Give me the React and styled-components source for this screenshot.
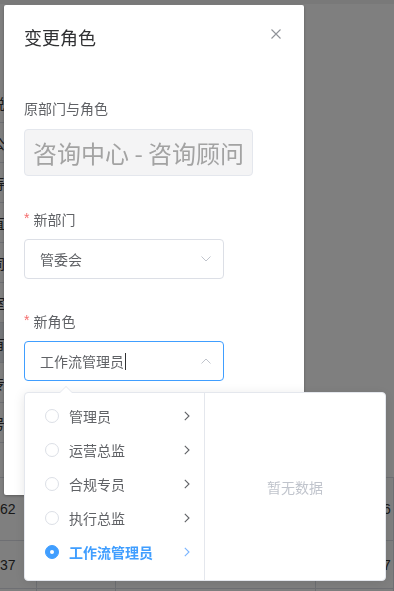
import React from 'react';
import styled, { createGlobalStyle } from 'styled-components';

const GlobalStyle = createGlobalStyle`
  html, body {
    margin: 0;
    padding: 0;
  }
  body {
    font-family: "Noto Sans CJK SC", "Noto Sans", sans-serif;
    background: #fff;
    overflow: hidden;
  }
`;

const Page = styled.div`
  width: 394px;
  height: 591px;
  overflow: hidden;
  display: flex;
  flex-direction: column;
`;

const TopStrip = styled.div`
  height: 4px;
  background: #f2f2f2;
  flex-shrink: 0;
`;

const SideArea = styled.div`
  height: 473px;
  flex-shrink: 0;
  overflow: hidden;
  padding-top: 79px;
  box-sizing: border-box;
`;

const SideRow = styled.div`
  width: 5px;
  height: 40px;
  box-sizing: border-box;
  border-bottom: 1px solid #dcdfe6;
  display: flex;
  align-items: center;
  justify-content: flex-end;
  overflow: hidden;
  white-space: nowrap;
  font-size: 14px;
  color: #333;
  background: ${({ $hover }) => ($hover ? '#e8ecf2' : 'transparent')};
`;

const BottomRow = styled.div`
  display: flex;
  height: ${({ $h }) => $h}px;
  flex-shrink: 0;
  border-top: 1px solid #dcdfe6;
  box-sizing: border-box;
`;

const Cell = styled.div`
  width: ${({ $w }) => $w}px;
  flex-shrink: 0;
  box-sizing: border-box;
  border-right: 1px solid #dcdfe6;
  display: flex;
  align-items: center;
  padding-left: ${({ $pl }) => $pl || 0}px;
  overflow: hidden;
  white-space: nowrap;
  font-family: "Liberation Sans", sans-serif;
  font-size: 14px;
  color: #333;
`;

const Overlay = styled.div`
  position: fixed;
  inset: 0;
  background: rgba(0, 0, 0, 0.5);
`;

const Modal = styled.div`
  position: fixed;
  left: 4px;
  top: 5px;
  width: 300px;
  height: 490px;
  background: #fff;
  border-radius: 2px;
  box-shadow: 0 1px 3px rgba(0, 0, 0, 0.3);
`;

const Header = styled.div`
  padding: 20px 20px 0;
  position: relative;
`;

const Title = styled.div`
  font-size: 18px;
  line-height: 24px;
  color: #303133;
`;

const CloseButton = styled.div`
  position: absolute;
  top: 21px;
  right: 20px;
  width: 16px;
  height: 16px;
  display: flex;
  align-items: center;
  justify-content: center;
`;

const Body = styled.div`
  padding: 49px 20px 0;
  display: flex;
  flex-direction: column;
`;

const FormItem = styled.div`
  display: flex;
  flex-direction: column;
  align-items: flex-start;
  margin-bottom: ${({ $mb }) => $mb}px;
`;

const Label = styled.div`
  font-size: 14px;
  line-height: 20px;
  color: #606266;
  margin-bottom: ${({ $gap }) => $gap}px;
  display: flex;
  align-items: flex-start;
`;

const Star = styled.span`
  font-family: "Liberation Sans", sans-serif;
  color: #f56c6c;
  margin-right: 4px;
  line-height: 18px;
`;

const ReadonlyBox = styled.div`
  display: inline-flex;
  align-items: center;
  height: 47px;
  box-sizing: border-box;
  padding: 0 8px;
  background: #f4f4f5;
  border: 1px solid #e4e7ed;
  border-radius: 4px;
  font-size: 24px;
  color: #a3a3a3;
  white-space: nowrap;
`;

const Select = styled.div`
  width: 200px;
  height: 40px;
  box-sizing: border-box;
  border: 1px solid ${({ $active }) => ($active ? '#409eff' : '#dcdfe6')};
  border-radius: 4px;
  display: flex;
  align-items: center;
  justify-content: space-between;
  padding: 0 12px 0 15px;
  font-size: 14px;
  color: #606266;
`;

const SelectText = styled.span`
  display: flex;
  align-items: center;
`;

const Caret = styled.span`
  display: inline-block;
  width: 1px;
  height: 17px;
  background: #303133;
  margin-left: 1px;
`;

const Popper = styled.div`
  position: fixed;
  left: 24px;
  top: 392px;
  width: 362px;
  height: 189px;
  box-sizing: border-box;
  border: 1px solid #e4e7ed;
  border-radius: 4px;
  background: #fff;
  box-shadow: 0 2px 12px rgba(0, 0, 0, 0.1);
  display: flex;

  &::before,
  &::after {
    content: '';
    position: absolute;
    left: 35px;
    width: 0;
    height: 0;
    border-style: solid;
    border-width: 0 6px 6px;
  }
  &::before {
    top: -7px;
    border-color: transparent transparent #e4e7ed;
  }
  &::after {
    top: -6px;
    border-color: transparent transparent #fff;
  }
`;

const Menu = styled.div`
  width: 180px;
  box-sizing: border-box;
  border-right: 1px solid #e4e7ed;
  padding: 6px 0;
`;

const Node = styled.div`
  height: 34px;
  display: flex;
  align-items: center;
  padding: 0 14px 0 20px;
  font-size: 14px;
  color: ${({ $active }) => ($active ? '#409eff' : '#606266')};
  font-weight: ${({ $active }) => ($active ? 700 : 400)};
`;

const Radio = styled.span`
  width: 14px;
  height: 14px;
  box-sizing: border-box;
  border-radius: 50%;
  border: 1px solid ${({ $checked }) => ($checked ? '#409eff' : '#dcdfe6')};
  background: ${({ $checked }) => ($checked ? '#409eff' : '#fff')};
  margin-right: 10px;
  flex-shrink: 0;
  display: flex;
  align-items: center;
  justify-content: center;

  &::after {
    content: '';
    width: 4px;
    height: 4px;
    border-radius: 50%;
    background: #fff;
    display: ${({ $checked }) => ($checked ? 'block' : 'none')};
  }
`;

const NodeLabel = styled.span`
  flex: 1;
`;

const Empty = styled.div`
  flex: 1;
  display: flex;
  align-items: center;
  justify-content: center;
  font-size: 14px;
  color: #c0c4cc;
`;

const Chevron = ({ dir = 'down', color = '#c0c4cc' }) => {
  if (dir === 'right') {
    return (
      <svg width="6" height="10" viewBox="0 0 6 10">
        <polyline points="0.8,0.8 5,5 0.8,9.2" fill="none" stroke={color} strokeWidth="1.1" />
      </svg>
    );
  }
  const pts = dir === 'up' ? '0.5,5.5 5,1 9.5,5.5' : '0.5,0.5 5,5 9.5,0.5';
  return (
    <svg width="10" height="6" viewBox="0 0 10 6">
      <polyline points={pts} fill="none" stroke={color} strokeWidth="1" />
    </svg>
  );
};

const sideTexts = ['说', '公', '寿', '直', '同', '室', '有', '专', '号', ''];

const roles = ['管理员', '运营总监', '合规专员', '执行总监', '工作流管理员'];

const App = () => {
  const selected = '工作流管理员';
  return (
    <>
      <GlobalStyle />
      <Page>
        <TopStrip />
        <SideArea>
          {sideTexts.map((t, i) => (
            <SideRow key={i} $hover={i === 6}>
              {t}
            </SideRow>
          ))}
        </SideArea>
        <BottomRow $h={63}>
          <Cell $w={37}>62</Cell>
          <Cell $w={79} />
          <Cell $w={200} />
          <Cell $w={78} $pl={67}>6 14:20</Cell>
        </BottomRow>
        <BottomRow $h={48}>
          <Cell $w={37}>37</Cell>
          <Cell $w={79} />
          <Cell $w={200} />
          <Cell $w={78} $pl={67}>7 09:15</Cell>
        </BottomRow>
        <BottomRow $h={40}>
          <Cell $w={37} />
          <Cell $w={79} />
          <Cell $w={200} />
          <Cell $w={78} />
        </BottomRow>
      </Page>
      <Overlay />
      <Modal>
        <Header>
          <Title>变更角色</Title>
          <CloseButton>
            <svg width="10" height="10" viewBox="0 0 10 10">
              <path d="M0.5 0.5 L9.5 9.5 M9.5 0.5 L0.5 9.5" stroke="#909399" strokeWidth="1.1" fill="none" />
            </svg>
          </CloseButton>
        </Header>
        <Body>
          <FormItem $mb={33}>
            <Label $gap={11}>原部门与角色</Label>
            <ReadonlyBox>咨询中心 - 咨询顾问</ReadonlyBox>
          </FormItem>
          <FormItem $mb={32}>
            <Label $gap={10}>
              <Star>*</Star>新部门
            </Label>
            <Select>
              <SelectText>管委会</SelectText>
              <Chevron dir="down" />
            </Select>
          </FormItem>
          <FormItem $mb={0}>
            <Label $gap={10}>
              <Star>*</Star>新角色
            </Label>
            <Select $active>
              <SelectText>
                工作流管理员
                <Caret />
              </SelectText>
              <Chevron dir="up" />
            </Select>
          </FormItem>
        </Body>
      </Modal>
      <Popper>
        <Menu>
          {roles.map((r) => {
            const active = r === selected;
            return (
              <Node key={r} $active={active}>
                <Radio $checked={active} />
                <NodeLabel>{r}</NodeLabel>
                <Chevron dir="right" color={active ? '#79b4ff' : '#606266'} />
              </Node>
            );
          })}
        </Menu>
        <Empty>暂无数据</Empty>
      </Popper>
    </>
  );
};

export default App;
